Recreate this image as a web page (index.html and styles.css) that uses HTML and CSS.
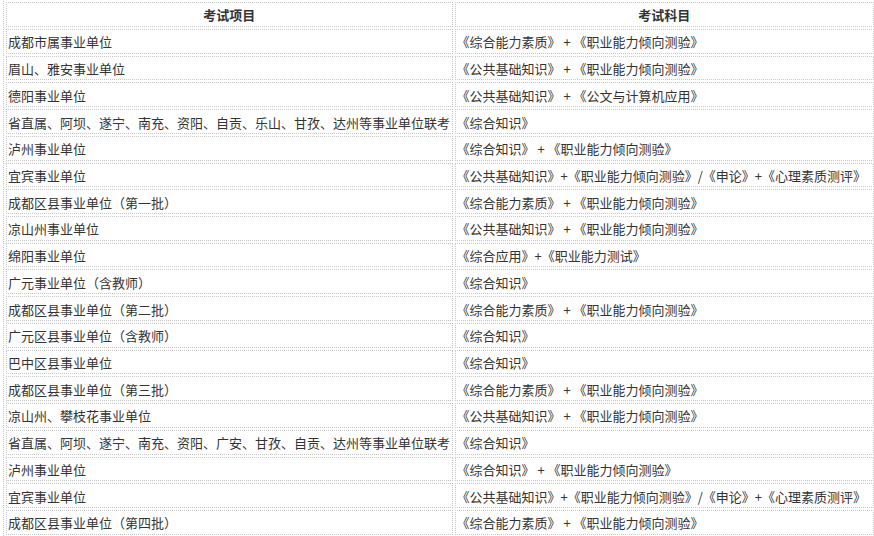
FILE: index.html
```html
<!DOCTYPE html>
<html lang="zh-CN">
<head>
<meta charset="utf-8">
<title>考试科目</title>
<link rel="stylesheet" href="styles.css">
</head>
<body>
<table class="exam">
  <colgroup><col class="c1"><col class="c2"></colgroup>
  <thead>
    <tr><th>考试项目</th><th>考试科目</th></tr>
  </thead>
  <tbody>
    <tr><td>成都市属事业单位</td><td>《综合能力素质》 + 《职业能力倾向测验》</td></tr>
    <tr><td>眉山、雅安事业单位</td><td>《公共基础知识》 + 《职业能力倾向测验》</td></tr>
    <tr><td>德阳事业单位</td><td>《公共基础知识》 + 《公文与计算机应用》</td></tr>
    <tr><td>省直属、阿坝、遂宁、南充、资阳、自贡、乐山、甘孜、达州等事业单位联考</td><td>《综合知识》</td></tr>
    <tr><td>泸州事业单位</td><td>《综合知识》 + 《职业能力倾向测验》</td></tr>
    <tr><td>宜宾事业单位</td><td>《公共基础知识》+《职业能力倾向测验》/《申论》+《心理素质测评》</td></tr>
    <tr><td>成都区县事业单位（第一批）</td><td>《综合能力素质》 + 《职业能力倾向测验》</td></tr>
    <tr><td>凉山州事业单位</td><td>《公共基础知识》 + 《职业能力倾向测验》</td></tr>
    <tr><td>绵阳事业单位</td><td>《综合应用》+《职业能力测试》</td></tr>
    <tr><td>广元事业单位（含教师）</td><td>《综合知识》</td></tr>
    <tr><td>成都区县事业单位（第二批）</td><td>《综合能力素质》 + 《职业能力倾向测验》</td></tr>
    <tr><td>广元区县事业单位（含教师）</td><td>《综合知识》</td></tr>
    <tr><td>巴中区县事业单位</td><td>《综合知识》</td></tr>
    <tr><td>成都区县事业单位（第三批）</td><td>《综合能力素质》 + 《职业能力倾向测验》</td></tr>
    <tr><td>凉山州、攀枝花事业单位</td><td>《公共基础知识》 + 《职业能力倾向测验》</td></tr>
    <tr><td>省直属、阿坝、遂宁、南充、资阳、广安、甘孜、自贡、达州等事业单位联考</td><td>《综合知识》</td></tr>
    <tr><td>泸州事业单位</td><td>《综合知识》 + 《职业能力倾向测验》</td></tr>
    <tr><td>宜宾事业单位</td><td>《公共基础知识》+《职业能力倾向测验》/《申论》+《心理素质测评》</td></tr>
    <tr><td>成都区县事业单位（第四批）</td><td>《综合能力素质》 + 《职业能力倾向测验》</td></tr>
  </tbody>
</table>
</body>
</html>
```
FILE: styles.css
```css
html, body {
  margin: 0;
  padding: 0;
  background: #fff;
  overflow: hidden;
}
body {
  font-family: "Noto Sans CJK SC", "Microsoft YaHei", sans-serif;
  font-size: 13px;
  color: #333;
}
.exam {
  margin: -1px 0 0 3px;
  width: 873px;
  table-layout: fixed;
  border-collapse: separate;
  border-spacing: 2px;
  border: 1px dotted #c8c8c8;
  border-right: 0;
}
.c1 { width: 446px; }
.c2 { width: 419px; }
.exam th,
.exam td {
  border: 1px dotted #c8c8c8;
  white-space: nowrap;
  overflow: hidden;
  text-align: left;
  vertical-align: middle;
  line-height: 18px;
}
.exam th {
  height: 23px;
  padding: 0 1px;
  font-weight: bold;
  text-align: center;
}
.exam td {
  height: 20.72px;
  padding: 2px 1px 0;
}
```
